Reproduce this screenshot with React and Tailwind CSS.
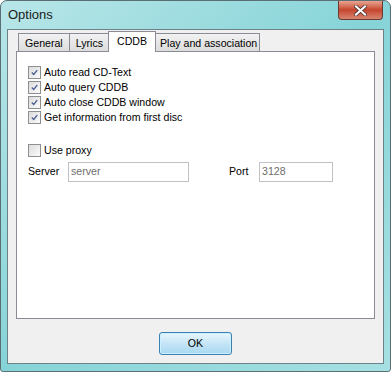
import React from 'react';

const font = { fontFamily: '"Liberation Sans", Arial, sans-serif' };

const Check = ({ checked, label }) => (
    <div className="flex items-center h-[15px]">
        <div className="w-[13px] h-[13px] border border-[#8e8f8f] bg-gradient-to-br from-[#dcdcdc] to-[#fbfbfb] p-[2px] flex items-center justify-center">
            {checked && (
                <svg width="9" height="9" viewBox="0 0 9 9">
                    <path d="M1 4.5 L3.5 7 L8 1.5" fill="none" stroke="#4a5f97" strokeWidth="1.8" />
                </svg>
            )}
        </div>
        <span className="ml-[3px] text-[10.6px] leading-none text-black">{label}</span>
    </div>
);

const Tab = ({ label, active, pad = 'px-[6px]' }) =>
    active ? (
        <div className="relative z-10 -mx-[2px] -mb-px h-[21px] px-[8px] pt-[4px] border border-b-0 border-[#898c95] bg-white text-[10.6px] leading-none text-black">
            {label}
        </div>
    ) : (
        <div className={`h-[18px] ${pad} pt-[4px] border border-b-0 border-r-0 last:border-r border-[#898c95] bg-gradient-to-b from-[#f2f2f2] to-[#dcdcdc] text-[10.6px] leading-none text-black`}>
            {label}
        </div>
    );

export default function App() {
    return (
        <div className="w-[391px] h-[372px] bg-white" style={font}>
            <div className="w-[391px] h-[372px] rounded-t-[7px] rounded-b-[3px] border border-[#5a6e74] bg-gradient-to-br from-[#b8e6e8] via-[#86d4d8] to-[#a6e0e2] flex flex-col relative overflow-hidden">
                {/* Title bar */}
                <div className="h-[28px] flex items-center pl-[7px] text-[13px] text-[#1c1c1c]">
                    Options
                </div>
                {/* Close */}
                <div className="absolute top-0 right-[7px] w-[45px] h-[19px] rounded-b-[4px] border border-t-0 border-[#6b3a32] bg-gradient-to-b from-[#e8a491] via-[#c5452c] to-[#d88570] flex items-center justify-center">
                    <svg width="13" height="11" viewBox="0 0 13 11">
                        <path d="M2 1.5 L11 9.5 M11 1.5 L2 9.5" stroke="#3a2a2a" strokeWidth="3.6" strokeLinecap="square" />
                        <path d="M2 1.5 L11 9.5 M11 1.5 L2 9.5" stroke="#ffffff" strokeWidth="2.2" strokeLinecap="square" />
                    </svg>
                </div>
                {/* Client */}
                <div className="mx-[6px] mb-[7px] flex-1 border border-[#6c8288] bg-[#f0f0f0] flex flex-col px-[8px]">
                    <div className="flex items-end h-[21px] pl-[2px]">
                        <Tab label="General" pad="pl-[6px] pr-[6px]" />
                        <Tab label="Lyrics" pad="pl-[6px] pr-[7px]" />
                        <Tab label="CDDB" active />
                        <Tab label="Play and association" pad="pl-[5px] pr-[2px]" />
                    </div>
                    <div className="h-[268px] border border-[#898c95] bg-white pl-[11px] pt-[13px]">
                        <Check checked label="Auto read CD-Text" />
                        <Check checked label="Auto query CDDB" />
                        <Check checked label="Auto close CDDB window" />
                        <Check checked label="Get information from first disc" />
                        <div className="mt-[18px]">
                            <Check label="Use proxy" />
                        </div>
                        <div className="flex items-center mt-[4px] h-[20px] text-[10.6px]">
                            <span className="w-[40px]">Server</span>
                            <div className="w-[121px] h-[20px] border border-[#c0c2c8] bg-white pl-[2px] flex items-center text-[#6d6d6d]">
                                server
                            </div>
                            <span className="ml-[40px] w-[30px]">Port</span>
                            <div className="w-[74px] h-[20px] border border-[#c0c2c8] bg-white pl-[2px] flex items-center text-[#6d6d6d]">
                                3128
                            </div>
                        </div>
                    </div>
                    <div className="flex justify-center mt-[13px]">
                        <div className="w-[73px] h-[23px] rounded-[3px] border border-[#3c7fb1] bg-gradient-to-b from-[#e9f6fd] via-[#c4e5f6] to-[#a8d8f2] flex items-center justify-center text-[10.6px] shadow-[inset_0_0_0_1px_#ccf0ff]">
                            OK
                        </div>
                    </div>
                </div>
            </div>
        </div>
    );
}
